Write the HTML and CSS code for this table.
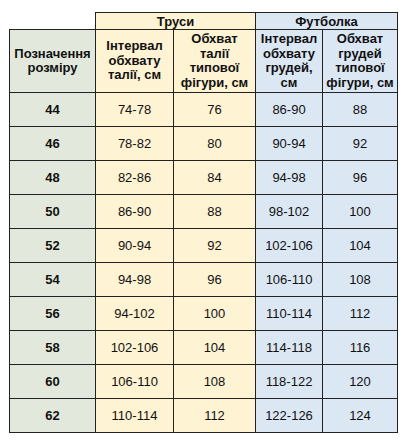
FILE: index.html
```html
<!DOCTYPE html>
<html lang="uk">
<head>
<meta charset="utf-8">
<link rel="stylesheet" href="styles.css">
</head>
<body>
<table class="sizes">
  <colgroup>
    <col class="c1"><col class="c2"><col class="c3"><col class="c4"><col class="c5">
  </colgroup>
  <thead>
    <tr class="group-row">
      <th class="blank"></th>
      <th class="y" colspan="2">Труси</th>
      <th class="b" colspan="2">Футболка</th>
    </tr>
    <tr class="head-row">
      <th class="g">Позначення розміру</th>
      <th class="y">Інтервал обхвату талії, см</th>
      <th class="y">Обхват талії типової фігури, см</th>
      <th class="b">Інтервал обхвату грудей, см</th>
      <th class="b">Обхват грудей типової фігури, см</th>
    </tr>
  </thead>
  <tbody>
    <tr><td class="g num">44</td><td class="y">74-78</td><td class="y">76</td><td class="b">86-90</td><td class="b">88</td></tr>
    <tr><td class="g num">46</td><td class="y">78-82</td><td class="y">80</td><td class="b">90-94</td><td class="b">92</td></tr>
    <tr><td class="g num">48</td><td class="y">82-86</td><td class="y">84</td><td class="b">94-98</td><td class="b">96</td></tr>
    <tr><td class="g num">50</td><td class="y">86-90</td><td class="y">88</td><td class="b">98-102</td><td class="b">100</td></tr>
    <tr><td class="g num">52</td><td class="y">90-94</td><td class="y">92</td><td class="b">102-106</td><td class="b">104</td></tr>
    <tr><td class="g num">54</td><td class="y">94-98</td><td class="y">96</td><td class="b">106-110</td><td class="b">108</td></tr>
    <tr><td class="g num">56</td><td class="y">94-102</td><td class="y">100</td><td class="b">110-114</td><td class="b">112</td></tr>
    <tr><td class="g num">58</td><td class="y">102-106</td><td class="y">104</td><td class="b">114-118</td><td class="b">116</td></tr>
    <tr><td class="g num">60</td><td class="y">106-110</td><td class="y">108</td><td class="b">118-122</td><td class="b">120</td></tr>
    <tr><td class="g num">62</td><td class="y">110-114</td><td class="y">112</td><td class="b">122-126</td><td class="b">124</td></tr>
  </tbody>
</table>
</body>
</html>
```

FILE: styles.css
```css
html, body {
  margin: 0;
  padding: 0;
  background: #ffffff;
}
body {
  padding: 12px 0 0 9px;
  font-family: "Liberation Sans", Arial, sans-serif;
  color: #111111;
}
.sizes {
  border-collapse: collapse;
  table-layout: fixed;
  width: 388px;
  font-size: 13px;
}
.c1 { width: 86px; }
.c2 { width: 78px; }
.c3 { width: 82px; }
.c4 { width: 67px; }
.c5 { width: 75px; }
.sizes th,
.sizes td {
  border: 1.5px solid #222222;
  text-align: center;
  vertical-align: middle;
  padding: 0 2px;
}
.sizes th {
  font-weight: bold;
  line-height: 14.5px;
}
.sizes th.blank {
  border: none;
  background: #ffffff;
}
.group-row th {
  height: 16px;
  line-height: 15px;
}
.head-row th {
  height: 62px;
}
.sizes td {
  height: 33px;
}
.num {
  font-weight: bold;
}
.g { background: #e2e9dc; }
.y { background: #fef3d3; }
.b { background: #dce7f4; }
```
